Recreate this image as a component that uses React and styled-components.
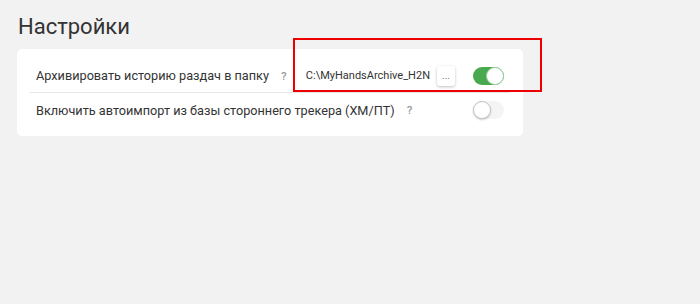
import styled, { createGlobalStyle } from "styled-components";

const Global = createGlobalStyle`
    html, body {
        margin:0;
        padding:0;
        background:#f2f2f2;
    }
    body {
        font-family:Roboto, "Noto Sans", sans-serif;
        color:#333;
    }
`

function Toggle({ on }) {
    return (
        <Track $on={on}>
            <Knob $on={on} />
        </Track>
    )
}

function App() {
    return (
        <>
            <Global />
            <Page>
                <Title>Настройки</Title>
                <Card>
                    <Row>
                        <Label>Архивировать историю раздач в папку</Label>
                        <Help>?</Help>
                        <Controls>
                            <Path>C:\MyHandsArchive_H2N</Path>
                            <Browse>...</Browse>
                            <Toggle on />
                        </Controls>
                    </Row>
                    <Row $last>
                        <Label>Включить автоимпорт из базы стороннего трекера (ХМ/ПТ)</Label>
                        <Help>?</Help>
                        <Controls>
                            <Toggle />
                        </Controls>
                    </Row>
                </Card>
                <Highlight />
            </Page>
        </>
    )
}

const Page = styled.div`
    position:relative;
    width:700px;
    height:304px;
    padding:14px 0 0 17px;
    box-sizing:border-box;
`
const Title = styled.h1`
    margin:0 0 9px 1px;
    font-size:22px;
    font-weight:400;
    line-height:26px;
    color:#333;
`
const Card = styled.div`
    width:506px;
    box-sizing:border-box;
    padding:10px 13px 9px;
    background:#fff;
    border-radius:5px;
`
const Row = styled.div`
    display:flex;
    align-items:center;
    height:34px;
    padding:0 6px 0 6px;
    border-bottom:${p => p.$last ? "none" : "1px solid #e6e6e6"};
    box-sizing:border-box;
    white-space:nowrap;
`
const Label = styled.span`
    font-size:12.7px;
    color:#333;
`
const Help = styled.span`
    margin-left:12px;
    font-size:11.5px;
    font-weight:500;
    color:#999;
`
const Controls = styled.div`
    display:flex;
    align-items:center;
    margin-left:auto;
`
const Path = styled.span`
    font-size:11px;
    color:#333;
`
const Browse = styled.div`
    display:flex;
    align-items:center;
    justify-content:center;
    width:18px;
    height:20px;
    margin:0 18px 0 7px;
    font-size:10px;
    color:#777;
    background:#fff;
    border-radius:3px;
    box-shadow:0 1px 3px rgba(0,0,0,0.25);
`
const Track = styled.div`
    position:relative;
    width:31px;
    height:18px;
    border-radius:9px;
    background:${p => p.$on ? "#4aa94e" : "#f4f4f4"};
`
const Knob = styled.div`
    position:absolute;
    top:0;
    left:${p => p.$on ? "13px" : "0"};
    width:18px;
    height:18px;
    box-sizing:border-box;
    border-radius:50%;
    background:#fff;
    border:1px solid ${p => p.$on ? "#9fd3a1" : "#c4c4c4"};
    box-shadow:${p => p.$on ? "none" : "0 1px 2px rgba(0,0,0,0.2)"};
`
const Highlight = styled.div`
    position:absolute;
    left:293px;
    top:38px;
    width:249px;
    height:54px;
    box-sizing:border-box;
    border:2px solid #ee0000;
    pointer-events:none;
`

export default App;
